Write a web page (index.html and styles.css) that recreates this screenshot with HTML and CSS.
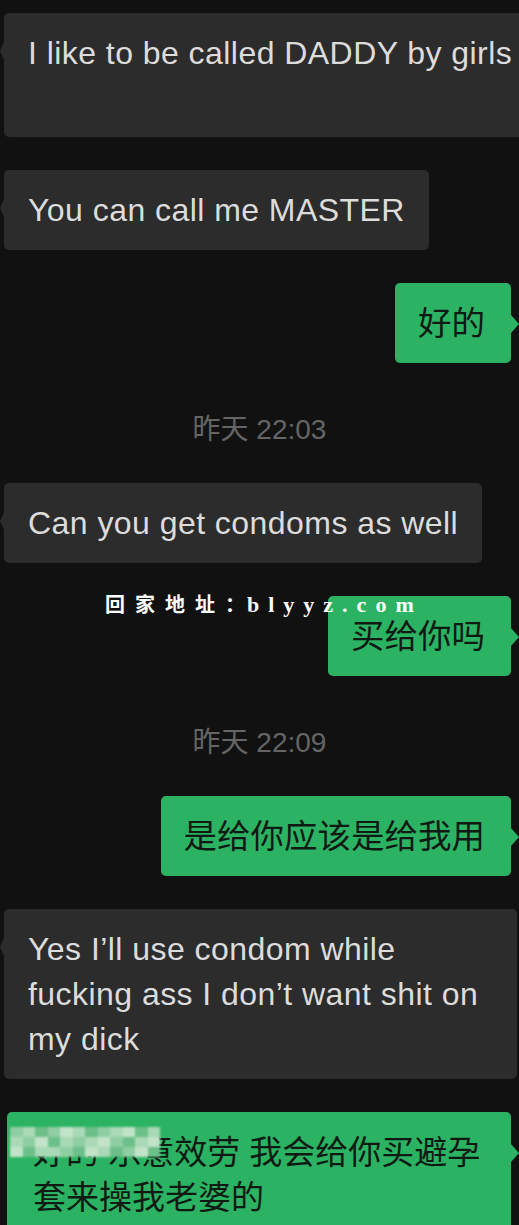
FILE: index.html
```html
<!DOCTYPE html>
<html lang="zh-CN">
<head>
<meta charset="utf-8">
<title>Chat</title>
<link rel="stylesheet" href="styles.css">
</head>
<body>
<div class="chat">
  <div class="row left">
    <div class="bubble in wide">I like to be called DADDY by girls</div>
  </div>
  <div class="row left">
    <div class="bubble in">You can call me MASTER</div>
  </div>
  <div class="row right">
    <div class="bubble out">好的</div>
  </div>
  <div class="time">昨天 22:03</div>
  <div class="row left">
    <div class="bubble in">Can you get condoms as well</div>
  </div>
  <div class="row right">
    <div class="bubble out">买给你吗</div>
  </div>
  <div class="time">昨天 22:09</div>
  <div class="row right">
    <div class="bubble out">是给你应该是给我用</div>
  </div>
  <div class="row left">
    <div class="bubble in multi">Yes I’ll use condom while<br>fucking ass I don’t want shit on<br>my dick</div>
  </div>
  <div class="row right">
    <div class="bubble out last">好的 乐意效劳 我会给你买避孕<br>套来操我老婆的
      <div class="mosaic">
        <i class="c1"></i><i class="c2"></i><i class="c3"></i><i class="c1"></i><i class="c4"></i><i class="c2"></i><i class="c3"></i><i class="c1"></i><i class="c2"></i><i class="c4"></i><i class="c3"></i><i class="c2"></i>
        <i class="c2"></i><i class="c1"></i><i class="c4"></i><i class="c3"></i><i class="c2"></i><i class="c1"></i><i class="c2"></i><i class="c4"></i><i class="c1"></i><i class="c3"></i><i class="c2"></i><i class="c4"></i>
        <i class="c4"></i><i class="c3"></i><i class="c2"></i><i class="c2"></i><i class="c1"></i><i class="c3"></i><i class="c4"></i><i class="c2"></i><i class="c3"></i><i class="c1"></i><i class="c4"></i><i class="c3"></i>
      </div>
    </div>
  </div>
</div>
<div class="watermark"><span class="wm-cjk">回家地址</span><span class="wm-colon">：</span><span class="wm-lat">blyyz.com</span></div>
</body>
</html>
```
FILE: styles.css
```css
html, body {
  margin: 0;
  padding: 0;
  background: #111111;
  overflow: hidden;
}
body {
  width: 519px;
  height: 1225px;
  position: relative;
  font-family: "Liberation Sans", "Noto Sans CJK SC", sans-serif;
}
.chat {
  display: flex;
  flex-direction: column;
  gap: 33px;
  padding-top: 13px;
}
.row {
  display: flex;
}
.row.left {
  justify-content: flex-start;
  padding-left: 4px;
}
.row.right {
  justify-content: flex-end;
  padding-right: 8px;
}
.bubble {
  position: relative;
  box-sizing: border-box;
  padding: 17.5px 24px;
  font-size: 32px;
  line-height: 45px;
  border-radius: 5px;
  max-width: 514px;
  white-space: nowrap;
}
.bubble.in {
  background: #2c2c2c;
  color: #dcdcdc;
  letter-spacing: 0.45px;
}
.bubble.out {
  background: #2bb363;
  color: #0e1a12;
  font-size: 33.5px;
  padding-left: 23px;
  padding-right: 26px;
}
.bubble.in::before {
  content: "";
  position: absolute;
  left: -4px;
  top: 29px;
  border-top: 9px solid transparent;
  border-bottom: 9px solid transparent;
  border-right: 4px solid #2c2c2c;
}
.bubble.out::after {
  content: "";
  position: absolute;
  right: -8px;
  top: 32px;
  border-top: 9px solid transparent;
  border-bottom: 9px solid transparent;
  border-left: 8px solid #2bb363;
}
.bubble.wide {
  width: 530px;
  max-width: none;
  min-height: 124px;
  border-radius: 5px 0 0 5px;
}
.bubble.multi {
  width: 513px;
}
.bubble.last {
  max-width: 504px;
  width: 504px;
  font-size: 33px;
  padding-left: 26px;
  min-height: 130px;
}
.time {
  margin-top: 14px;
  height: 40px;
  line-height: 40px;
  text-align: center;
  font-size: 28px;
  color: #656565;
}
.mosaic {
  position: absolute;
  left: 3px;
  top: 15px;
  width: 150px;
  height: 30px;
  display: grid;
  grid-template-columns: repeat(12, 1fr);
  grid-template-rows: repeat(3, 1fr);
  filter: blur(1px);
}
.mosaic i { display: block; }
.mosaic .c1 { background: #8fcea2; }
.mosaic .c2 { background: #a9d9b6; }
.mosaic .c3 { background: #6cbf88; }
.mosaic .c4 { background: #c3e3c9; }
.watermark {
  position: absolute;
  left: 105px;
  top: 589px;
  color: #ffffff;
  font-weight: bold;
  white-space: nowrap;
  line-height: 30px;
}
.wm-cjk,
.wm-colon {
  font-family: "Noto Sans CJK SC", sans-serif;
  font-size: 20px;
  letter-spacing: 10px;
}
.wm-colon {
  letter-spacing: 2px;
}
.wm-lat {
  font-family: "Liberation Serif", serif;
  font-size: 22px;
  letter-spacing: 9px;
}
```
